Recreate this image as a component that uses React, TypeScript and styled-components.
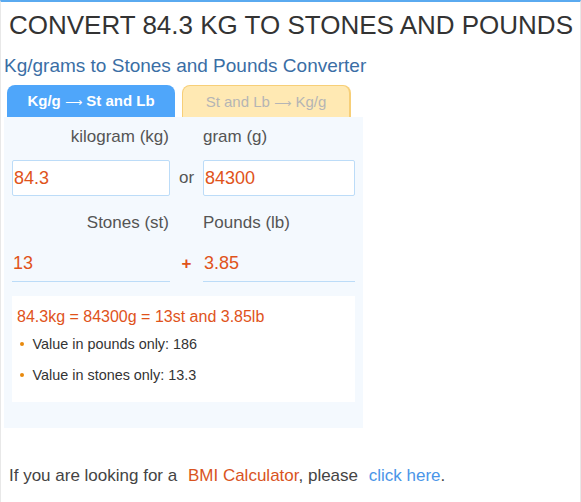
import React from "react";
import styled, { createGlobalStyle } from "styled-components";

const Global = createGlobalStyle`
  html, body { margin: 0; padding: 0; background: #ffffff; }
  body { font-family: "Liberation Sans", Arial, sans-serif; color: #333; }
`;

const Page = styled.div`
  box-sizing: border-box;
  min-height: 100vh;
  border-top: 2px solid #5aaaf0;
  border-left: 1px solid #e8e8e8;
  border-right: 1px solid #e8e8e8;
  padding: 0 0 10px 3px;
`;

const Title = styled.h1`
  margin: 8px 0 0;
  padding-left: 5px;
  font-size: 26px;
  line-height: 30px;
  font-weight: normal;
  color: #333;
  white-space: nowrap;
`;

const Subtitle = styled.h2`
  margin: 15px 0 0;
  font-size: 19px;
  line-height: 22px;
  font-weight: normal;
  color: #3a6ea5;
`;

const Tabs = styled.div`
  display: flex;
  gap: 7px;
  margin: 8px 0 0 3px;
`;

const Tab = styled.div<{ $active?: boolean }>`
  box-sizing: border-box;
  width: 168px;
  height: 32px;
  padding-top: 0;
  line-height: 31px;
  text-align: center;
  font-size: 15px;
  white-space: nowrap;
  border-radius: 8px 8px 0 0;
  font-weight: ${(p) => (p.$active ? "bold" : "normal")};
  color: ${(p) => (p.$active ? "#ffffff" : "#b5b5b5")};
  background: ${(p) => (p.$active ? "#4fa6fa" : "#ffe9b3")};
  border: ${(p) => (p.$active ? "none" : "1px solid #f7cf78")};
  border-bottom: none;
  ${(p) => (p.$active ? "" : "width: 169px; border-right-width: 2px;")}
`;

const Arrow = styled.span`
  font-family: "DejaVu Sans", sans-serif;
  font-weight: normal;
  font-size: 12px;
`;

const Panel = styled.div`
  width: 359px;
  box-sizing: border-box;
  background: #f4f9fe;
  padding: 10px 8px 26px 8px;
`;

const Row = styled.div<{ $top?: number }>`
  display: grid;
  grid-template-columns: 158px 33px 152px;
  align-items: center;
  margin-top: ${(p) => p.$top ?? 0}px;
`;

const Label = styled.div<{ $right?: boolean }>`
  font-size: 17px;
  line-height: 20px;
  color: #555;
  text-align: ${(p) => (p.$right ? "right" : "left")};
  padding-right: ${(p) => (p.$right ? "1px" : "0")};
`;

const Input = styled.input`
  box-sizing: border-box;
  width: 100%;
  height: 36px;
  margin: 0;
  padding: 0 1px;
  border: 1px solid #bcdcf8;
  border-radius: 2px;
  background: #fff;
  font-family: "Liberation Sans", Arial, sans-serif;
  font-size: 18px;
  color: #e0531b;
  outline: none;
`;

const Output = styled.div`
  box-sizing: border-box;
  height: 36px;
  padding: 0 2px 0 1px;
  border-bottom: 1px solid #bcdcf8;
  display: flex;
  align-items: center;
  font-size: 18px;
  color: #e0531b;
`;

const Sep = styled.div<{ $plus?: boolean }>`
  text-align: center;
  font-size: 17px;
  color: ${(p) => (p.$plus ? "#e0531b" : "#555")};
  font-weight: ${(p) => (p.$plus ? "bold" : "normal")};
`;

const Result = styled.div`
  margin-top: 14px;
  background: #ffffff;
  padding: 11px 5px 17px;
`;

const ResultLine = styled.div`
  font-size: 16px;
  line-height: 19px;
  color: #e0531b;
`;

const List = styled.ul`
  list-style: none;
  margin: 8px 0 0;
  padding: 0;
`;

const Item = styled.li`
  display: flex;
  align-items: center;
  height: 20px;
  font-size: 14.4px;
  color: #333;
  & + & {
    margin-top: 10.7px;
  }
`;

const Dot = styled.span`
  width: 4px;
  height: 4px;
  border-radius: 50%;
  background: #e8890c;
  margin: 0 8.5px 0 3px;
  flex: none;
`;

const Footer = styled.p`
  margin: 38px 0 0;
  padding-left: 5px;
  font-size: 17px;
  line-height: 20px;
  color: #444;
`;

const Link = styled.a<{ $color: string }>`
  color: ${(p) => p.$color};
  text-decoration: none;
  margin-left: 6px;
`;

export default function App() {
  return (
    <>
      <Global />
      <Page>
        <Title>CONVERT 84.3 KG TO STONES AND POUNDS</Title>
        <Subtitle>Kg/grams to Stones and Pounds Converter</Subtitle>
        <Tabs>
          <Tab $active>
            Kg/g <Arrow>⟶</Arrow> St and Lb
          </Tab>
          <Tab>
            St and Lb <Arrow>⟶</Arrow> Kg/g
          </Tab>
        </Tabs>
        <Panel>
          <Row>
            <Label $right>kilogram (kg)</Label>
            <span />
            <Label>gram (g)</Label>
          </Row>
          <Row $top={13}>
            <Input defaultValue="84.3" />
            <Sep>or</Sep>
            <Input defaultValue="84300" />
          </Row>
          <Row $top={17}>
            <Label $right>Stones (st)</Label>
            <span />
            <Label>Pounds (lb)</Label>
          </Row>
          <Row $top={13}>
            <Output>13</Output>
            <Sep $plus>+</Sep>
            <Output>3.85</Output>
          </Row>
          <Result>
            <ResultLine>84.3kg = 84300g = 13st and 3.85lb</ResultLine>
            <List>
              <Item>
                <Dot />
                Value in pounds only: 186
              </Item>
              <Item>
                <Dot />
                Value in stones only: 13.3
              </Item>
            </List>
          </Result>
        </Panel>
        <Footer>
          If you are looking for a
          <Link $color="#d9541e" href="#"> BMI Calculator</Link>, please
          <Link $color="#4a95e8" href="#"> click here</Link>.
        </Footer>
      </Page>
    </>
  );
}
